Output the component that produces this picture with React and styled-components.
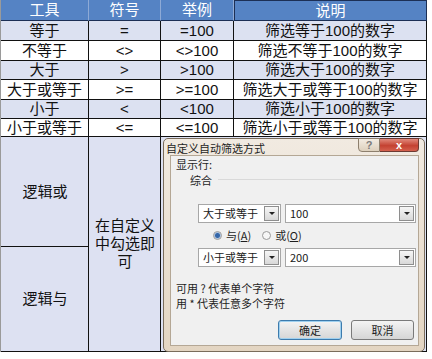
import styled, { createGlobalStyle } from 'styled-components';

const GlobalStyle = createGlobalStyle`
  body {
    margin: 0;
    background: #ffffff;
    font-family: "Liberation Sans", "Noto Sans CJK SC", sans-serif;
  }
`;

const rows = [
  { tool: '等于', sign: '=', sample: '=100', note: '筛选等于100的数字', h: 20 },
  { tool: '不等于', sign: '<>', sample: '<>100', note: '筛选不等于100的数字', h: 20 },
  { tool: '大于', sign: '>', sample: '>100', note: '筛选大于100的数字', h: 19 },
  { tool: '大于或等于', sign: '>=', sample: '>=100', note: '筛选大于或等于100的数字', h: 20 },
  { tool: '小于', sign: '<', sample: '<100', note: '筛选小于100的数字', h: 19 },
  { tool: '小于或等于', sign: '<=', sample: '<=100', note: '筛选小于或等于100的数字', h: 18 },
];

const Sheet = styled.div`
  width: 427px;
  border-left: 1px solid #9a9a9a;
  box-sizing: border-box;
`;

const Grid = styled.div`
  display: grid;
  grid-template-columns: 88px 72px 73px 193px;
`;

const HeadCell = styled.div`
  height: 21px;
  box-sizing: border-box;
  background: #5583c4;
  color: #ffffff;
  font-size: 15px;
  line-height: 18px;
  display: flex;
  align-items: center;
  justify-content: center;
  border-right: 1px solid ${(p) => (p.$last ? '#1c2f55' : '#8eaad6')};
  border-bottom: 1px solid #1c2f55;
  ${(p) => p.$marked && 'border-left: 1px solid #1c2f55; border-top: 1px solid #1c2f55;'}
`;

const Cell = styled.div`
  box-sizing: border-box;
  background: ${(p) => (p.$shade ? '#dce1f1' : '#ffffff')};
  color: #111111;
  font-size: 15px;
  line-height: 18px;
  display: flex;
  align-items: center;
  justify-content: center;
  white-space: nowrap;
  border-right: 1px solid #111111;
  border-bottom: 1px solid #111111;
`;

const Lower = styled.div`
  display: grid;
  grid-template-columns: 88px 72px 266px;
  grid-template-rows: 110px 105px;
`;

const BigCell = styled.div`
  box-sizing: border-box;
  background: #dde1f2;
  color: #111111;
  font-size: 15px;
  line-height: 18px;
  display: flex;
  align-items: center;
  justify-content: center;
  text-align: center;
  padding: 0 2px 0 3px;
  border-right: 1px solid #111111;
  border-bottom: 1px solid #111111;
  grid-column: ${(p) => p.$col};
  grid-row: ${(p) => p.$row};
`;

const DialogSlot = styled.div`
  grid-column: 3;
  grid-row: 1 / 3;
  background: #dde1f2;
  border-right: 1px solid #111111;
  border-bottom: 1px solid #111111;
  box-sizing: border-box;
  padding: 1px 1px 0 2px;
`;

const Dialog = styled.div`
  height: 214px;
  box-sizing: border-box;
  border: 1px solid #7a6d5c;
  border-radius: 5px;
  background: linear-gradient(#f1eae1, #e3d5c2);
  display: flex;
  flex-direction: column;
  padding: 0 5px 5px 6px;
  font-family: "Noto Sans CJK SC", "Liberation Sans", sans-serif;
  font-size: 11px;
  color: #1e1e1e;
  white-space: nowrap;
`;

const TitleBar = styled.div`
  height: 16px;
  display: flex;
  align-items: flex-start;
  justify-content: space-between;
`;

const Title = styled.span`
  line-height: 16px;
  margin-left: -4px;
  padding-top: 1px;
`;

const Controls = styled.div`
  display: flex;
  margin-top: -1px;
`;

const CtrlButton = styled.div`
  height: 14px;
  width: ${(p) => (p.$close ? '39px' : '22px')};
  box-sizing: border-box;
  border: 1px solid ${(p) => (p.$close ? '#6d3a32' : '#8d7f6d')};
  border-left: ${(p) => (p.$close ? 'none' : undefined)};
  border-radius: ${(p) => (p.$close ? '0 0 4px 0' : '0 0 0 4px')};
  background: ${(p) =>
    p.$close ? 'linear-gradient(#e18a7c, #c44232 55%, #d4604e)' : 'linear-gradient(#f3ece2, #ddd0bd)'};
  color: ${(p) => (p.$close ? '#ffffff' : '#7b7b7b')};
  font-family: "Liberation Sans", sans-serif;
  font-size: 11px;
  font-weight: bold;
  display: flex;
  align-items: center;
  justify-content: center;
`;

const Panel = styled.div`
  flex: 1;
  background: #f0f0f0;
  border: 1px solid #b4a795;
  display: flex;
  flex-direction: column;
  padding: 0 4px 0 5px;
`;

const Label = styled.div`
  line-height: 15px;
  height: 15px;
  margin-top: ${(p) => p.$top || 0}px;
`;

const GroupRow = styled.div`
  display: flex;
  align-items: center;
  height: 15px;
  margin-left: 14px;
`;

const Rule = styled.div`
  flex: 1;
  height: 0;
  border-top: 1px solid #d9d9d9;
  margin: 0 0 0 6px;
`;

const ComboRow = styled.div`
  display: flex;
  gap: 4px;
  height: 19px;
  margin-left: 22px;
  margin-top: ${(p) => p.$top}px;
`;

const Combo = styled.div`
  width: ${(p) => p.$w}px;
  flex: none;
  box-sizing: border-box;
  background: #ffffff;
  border: 1px solid #a7a7a7;
  display: flex;
  align-items: stretch;
`;

const ComboText = styled.span`
  flex: 1;
  line-height: 17px;
  padding-left: 4px;
  color: #202020;
`;

const Arrow = styled.span`
  width: 15px;
  flex: none;
  box-sizing: border-box;
  margin: 1px;
  border: 1px solid #8e8e8e;
  background: linear-gradient(#f6f6f6, #d8d8d8);
  display: flex;
  align-items: center;
  justify-content: center;

  &::after {
    content: '';
    border-left: 3px solid transparent;
    border-right: 3px solid transparent;
    border-top: 3px solid #222;
  }
`;

const RadioRow = styled.div`
  display: flex;
  align-items: center;
  height: 16px;
  margin-top: 4px;
  margin-left: 37px;
  gap: 11px;
`;

const Radio = styled.span`
  display: flex;
  align-items: center;
  gap: 4px;

  &::before {
    content: '';
    width: 9px;
    height: 9px;
    box-sizing: border-box;
    border-radius: 50%;
    border: 1px solid #9a9a9a;
    background: ${(p) =>
      p.$on ? 'radial-gradient(circle, #3466a8 0 2px, #a9c3e2 3px, #f6f6f6 4px)' : '#f6f6f6'};
  }

  u {
    text-decoration: underline;
  }
`;

const ButtonRow = styled.div`
  display: flex;
  justify-content: flex-end;
  gap: 9px;
  margin-top: 9px;
`;

const Button = styled.div`
  width: ${(p) => (p.$primary ? 64 : 63)}px;
  height: 20px;
  box-sizing: border-box;
  border: 1px solid ${(p) => (p.$primary ? '#3d7bad' : '#7a7a7a')};
  border-radius: 3px;
  background: linear-gradient(#f4f4f4, #e4e4e4 50%, #d6d6d6);
  display: flex;
  align-items: center;
  justify-content: center;
  box-shadow: ${(p) => (p.$primary ? 'inset 0 0 0 1px #9fd0ef' : 'none')};
`;

const App = () => {
  return (
    <>
      <GlobalStyle />
      <Sheet>
        <Grid>
          <HeadCell>工具</HeadCell>
          <HeadCell>符号</HeadCell>
          <HeadCell>举例</HeadCell>
          <HeadCell $marked $last>说明</HeadCell>
          {rows.map((r, i) => {
            const shade = i % 2 === 0;
            return [r.tool, r.sign, r.sample, r.note].map((t, j) => (
              <Cell key={`${i}-${j}`} $shade={shade} style={{ height: r.h }}>
                {t}
              </Cell>
            ));
          })}
        </Grid>
        <Lower>
          <BigCell $col="1" $row="1">逻辑或</BigCell>
          <BigCell $col="1" $row="2">逻辑与</BigCell>
          <BigCell $col="2" $row="1 / 3">在自定义中勾选即可</BigCell>
          <DialogSlot>
            <Dialog>
              <TitleBar>
                <Title>自定义自动筛选方式</Title>
                <Controls>
                  <CtrlButton>?</CtrlButton>
                  <CtrlButton $close>x</CtrlButton>
                </Controls>
              </TitleBar>
              <Panel>
                <Label $top={1}>显示行:</Label>
                <GroupRow>
                  综合
                  <Rule />
                </GroupRow>
                <ComboRow $top={17}>
                  <Combo $w={83}>
                    <ComboText>大于或等于</ComboText>
                    <Arrow />
                  </Combo>
                  <Combo $w={131}>
                    <ComboText>100</ComboText>
                    <Arrow />
                  </Combo>
                </ComboRow>
                <RadioRow>
                  <Radio $on>
                    <span>
                      与(<u>A</u>)
                    </span>
                  </Radio>
                  <Radio>
                    <span>
                      或(<u>O</u>)
                    </span>
                  </Radio>
                </RadioRow>
                <ComboRow $top={5}>
                  <Combo $w={83}>
                    <ComboText>小于或等于</ComboText>
                    <Arrow />
                  </Combo>
                  <Combo $w={131}>
                    <ComboText>200</ComboText>
                    <Arrow />
                  </Combo>
                </ComboRow>
                <Label $top={14}>可用 ? 代表单个字符</Label>
                <Label>用 * 代表任意多个字符</Label>
                <ButtonRow>
                  <Button $primary>确定</Button>
                  <Button>取消</Button>
                </ButtonRow>
              </Panel>
            </Dialog>
          </DialogSlot>
        </Lower>
      </Sheet>
    </>
  );
};

export default App;
